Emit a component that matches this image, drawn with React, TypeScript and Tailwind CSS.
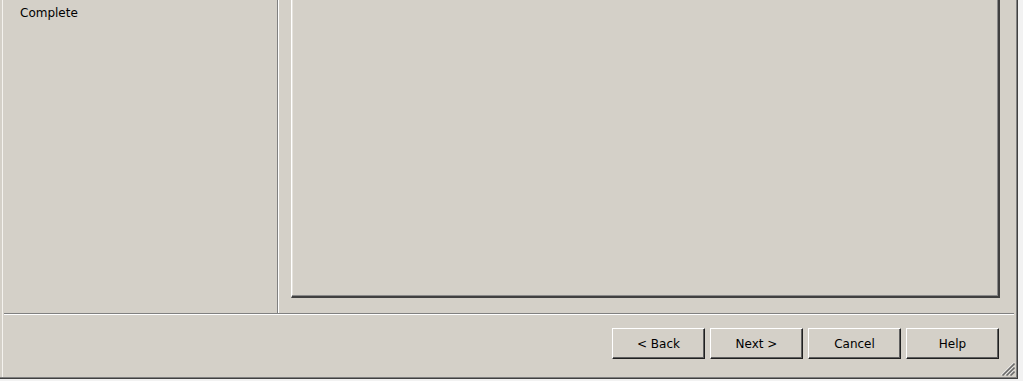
const buttons = ['< Back', 'Next >', 'Cancel', 'Help'];

function Grip() {
  return (
    <svg width="14" height="14" viewBox="0 0 14 14" className="absolute right-[2px] bottom-[2px]">
      {[0, 4, 8].map((o) => (
        <g key={o}>
          <line x1={13} y1={o + 0.5} x2={o + 0.5} y2={13} stroke="#ffffff" strokeWidth="1" />
          <line x1={13.5} y1={o + 1.5} x2={o + 1.5} y2={13.5} stroke="#6b6b6b" strokeWidth="1.6" />
        </g>
      ))}
    </svg>
  );
}

export default function App() {
  return (
    <div className="w-[1023px] h-[381px] bg-[#f2f2f2] overflow-hidden font-['DejaVu_Sans',sans-serif] text-[12px] text-black">
      <div className="relative w-[1018px] h-[379px] bg-[#d4d0c8] border-r border-b border-[#404040] shadow-[inset_-1px_-1px_0_#808080,inset_2px_0_0_#d4d0c8,inset_3px_0_0_#f4f2ee] flex flex-col">
        <div className="flex h-[313px]">
          <div className="w-[278px] border-r border-[#808080] pl-[20px] pt-[6px] leading-[14px]">
            Complete
          </div>
          <div className="flex-1 flex border-l border-white pl-[12px] pr-[17px] pb-[15px]">
            <div className="flex-1 border-l border-r-2 border-b-2 border-r-[#404040] border-b-[#404040] border-l-white shadow-[inset_-1px_-1px_0_#8a8a8a,inset_1px_0_0_#e6e3dd]" />
          </div>
        </div>
        <div className="ml-[4px] mr-[3px] h-[2px] border-t border-[#808080] border-b border-b-white" />
        <div className="flex justify-end gap-[5px] pt-[13px] pr-[18px]">
          {buttons.map((b) => (
            <button
              key={b}
              className="w-[93px] h-[31px] bg-[#d4d0c8] border border-t-white border-l-white border-r-[#202020] border-b-[#202020] shadow-[inset_-1px_-1px_0_#606060] leading-[14px] text-[12px] text-black"
            >
              {b}
            </button>
          ))}
        </div>
        <Grip />
      </div>
    </div>
  );
}
